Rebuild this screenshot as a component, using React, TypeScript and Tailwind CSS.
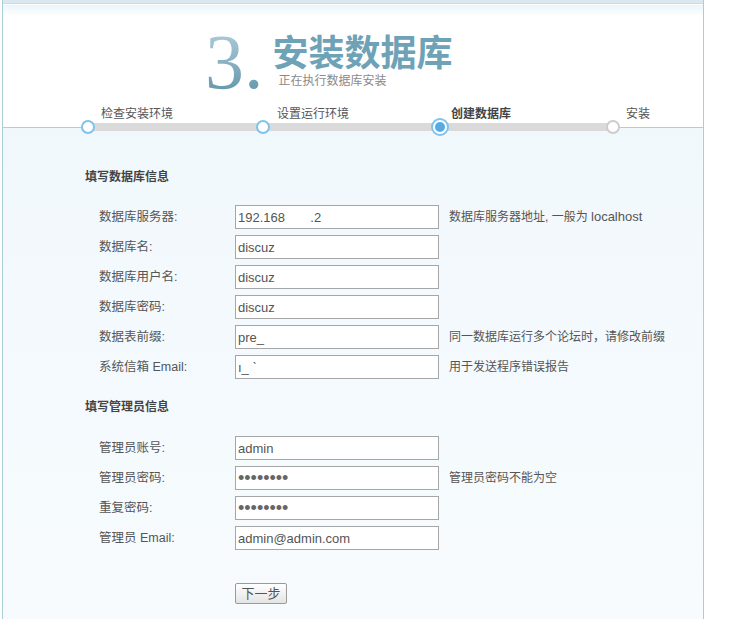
import React from 'react';

const font = { fontFamily: '"Liberation Sans", "Noto Sans CJK SC", sans-serif' };

interface Field {
  label: string;
  value: string;
  secret?: boolean;
  hint?: React.ReactNode;
}

const dbFields: Field[] = [
  {
    label: '数据库服务器:',
    value: '192.168       .2',
    hint: (
      <>
        数据库服务器地址, 一般为 <span className="text-[13px]">localhost</span>
      </>
    ),
  },
  { label: '数据库名:', value: 'discuz' },
  { label: '数据库用户名:', value: 'discuz' },
  { label: '数据库密码:', value: 'discuz' },
  { label: '数据表前缀:', value: 'pre_', hint: '同一数据库运行多个论坛时，请修改前缀' },
  { label: '系统信箱 Email:', value: 'ı_ ˋ', hint: '用于发送程序错误报告' },
];

const adminFields: Field[] = [
  { label: '管理员账号:', value: 'admin' },
  { label: '管理员密码:', value: '••••••••', secret: true, hint: '管理员密码不能为空' },
  { label: '重复密码:', value: '••••••••', secret: true },
  { label: '管理员 Email:', value: 'admin@admin.com' },
];

function Row({ field }: { field: Field }) {
  return (
    <div className="flex items-center h-[24px]">
      <div className="w-[136px] text-[12.5px] text-[#555]">{field.label}</div>
      <input
        readOnly
        type="text"
        value={field.value}
        className={
          field.secret
            ? 'w-[204px] h-[24px] border border-[#a6a6a6] bg-white pl-[2px] text-[18px] leading-[22px] text-[#666] outline-none'
            : 'w-[204px] h-[24px] border border-[#a6a6a6] bg-white pl-[2px] text-[13px] text-[#555] outline-none whitespace-pre'
        }
        style={font}
      />
      {field.hint && <div className="ml-[10px] text-[12px] text-[#555]">{field.hint}</div>}
    </div>
  );
}

function Steps() {
  return (
    <div className="relative h-[23px] mt-[3px]">
      <div className="flex pl-[98px] pt-[2px] text-[12px] leading-[16px] text-[#555]">
        <span className="w-[176px]">检查安装环境</span>
        <span className="w-[174px]">设置运行环境</span>
        <span className="w-[175px] font-bold text-[#444]">创建数据库</span>
        <span>安装</span>
      </div>
      <div className="absolute left-[85px] top-[19px] w-[525px] h-[8px] bg-[#dadada] z-10" />
      <div className="absolute left-[78px] top-[16px] w-[14px] h-[14px] rounded-full border-2 border-[#7ec3f0] bg-white z-20" />
      <div className="absolute left-[253px] top-[16px] w-[14px] h-[14px] rounded-full border-2 border-[#7ec3f0] bg-white z-20" />
      <div className="absolute left-[428px] top-[14px] w-[18px] h-[18px] rounded-full border-2 border-[#7ec3f0] bg-white z-20 flex items-center justify-center">
        <div className="w-[10px] h-[10px] rounded-full bg-[#56aae6]" />
      </div>
      <div className="absolute left-[603px] top-[16px] w-[14px] h-[14px] rounded-full border-2 border-[#cccccc] bg-white z-20" />
    </div>
  );
}

export default function App() {
  return (
    <div className="w-[740px] h-[619px] bg-white overflow-hidden" style={font}>
      <div className="ml-[2px] w-[702px] h-full border-x border-[#a9cdd9] flex flex-col">
        <div className="h-[3px] bg-[#d9e8f1]" />
        <div className="h-[1px] bg-[#c7dde9]" />
        <div className="h-[1px] bg-white" />
        <div className="h-[11px] bg-gradient-to-b from-[#eaf5fb] to-white" />
        <div className="border-b border-[#a9cfe0]">
          <div className="flex items-start pl-[202px] mt-[7px] h-[78px]">
            <div
              className="text-[78px] leading-[78px] bg-gradient-to-b from-[#b7d4e0] to-[#5a90a5] bg-clip-text text-transparent"
              style={{ fontFamily: '"Liberation Serif", serif' }}
            >
              3.
            </div>
            <div className="ml-[9px] mt-[9px] flex flex-col">
              <div
                className="text-[36px] leading-[36px] font-bold text-[#6ea2b6]"
                style={{ fontFamily: '"Noto Sans CJK SC", sans-serif' }}
              >
                安装数据库
              </div>
              <div className="ml-[6px] mt-[6px] text-[12px] leading-[14px] text-[#8a8a8a]">正在执行数据库安装</div>
            </div>
          </div>
          <Steps />
        </div>
        <div className="flex-1 bg-gradient-to-b from-[#f1f8fc] to-[#f7fbfe] pl-[82px] pt-[41px]">
          <div className="text-[12px] leading-[16px] font-bold text-[#444]">填写数据库信息</div>
          <div className="mt-[20px] pl-[14px] flex flex-col gap-[6px]">
            {dbFields.map((f) => (
              <Row key={f.label} field={f} />
            ))}
          </div>
          <div className="mt-[20px] text-[12px] leading-[16px] font-bold text-[#444]">填写管理员信息</div>
          <div className="mt-[21px] pl-[14px] flex flex-col gap-[6px]">
            {adminFields.map((f) => (
              <Row key={f.label} field={f} />
            ))}
          </div>
          <div className="mt-[31px] pl-[150px]">
            <button className="w-[52px] h-[21px] border border-[#9a9a9a] rounded-[2px] bg-gradient-to-b from-white to-[#e4e4e4] text-[13px] leading-[19px] text-[#555]">
              下一步
            </button>
          </div>
        </div>
      </div>
    </div>
  );
}
